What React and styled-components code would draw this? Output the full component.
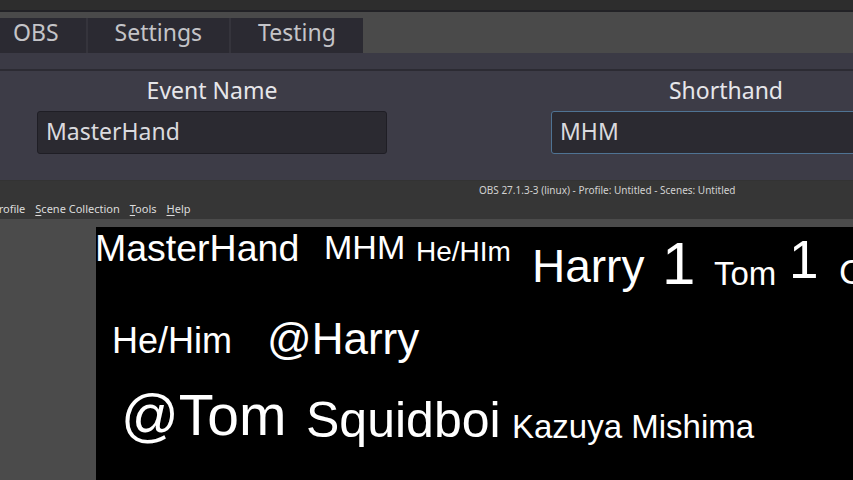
import React from 'react';
import styled, { createGlobalStyle } from 'styled-components';

const GlobalStyle = createGlobalStyle`
  html, body {
    margin: 0;
    padding: 0;
    background: #2e2e2e;
    overflow: hidden;
  }
  body {
    font-family: "Noto Sans", "Open Sans", sans-serif;
  }
`;

const Page = styled.div`
  width: 853px;
  height: 480px;
  display: flex;
  flex-direction: column;
  overflow: hidden;
  background: #2e2e2e;
`;

const TopStrip = styled.div`
  height: 10px;
  flex: none;
  background: #2d2d2d;
  border-bottom: 2px solid #222226;
`;

const TabBar = styled.div`
  height: 41px;
  flex: none;
  display: flex;
  align-items: flex-end;
  background: #4a4a4a;
`;

const TabRow = styled.div`
  display: flex;
  gap: 2px;
  margin-left: -14px;
  background: #35343c;
`;

const Tab = styled.div`
  box-sizing: border-box;
  height: 35px;
  padding: 0 27px 8px;
  display: flex;
  align-items: center;
  background: #2b2a32;
  color: #c4c4c8;
  font-size: 23px;
`;

const SubBar = styled.div`
  height: 16px;
  flex: none;
  background: #3b3a45;
  border-bottom: 2px solid #2c2b33;
`;

const FieldPanel = styled.div`
  height: 109px;
  flex: none;
  display: flex;
  gap: 164px;
  padding-left: 37px;
  background: #3d3c47;
`;

const Field = styled.div`
  width: 350px;
  flex: none;
  display: flex;
  flex-direction: column;
  align-items: center;
  padding-top: 3px;
`;

const FieldLabel = styled.div`
  color: #e6e6ea;
  font-size: 23px;
  line-height: 32px;
  margin-bottom: 5px;
`;

const TextInput = styled.input`
  box-sizing: border-box;
  width: 100%;
  height: 43px;
  padding: 0 8px 4px;
  border-radius: 3px;
  border: 1px solid ${p => (p.$focused ? '#4f7393' : '#1f1e25')};
  background: #2b2a31;
  color: #dadade;
  font-family: "Noto Sans", "Open Sans", sans-serif;
  font-size: 23px;
  outline: none;
`;

const ObsWindow = styled.div`
  flex: 1;
  display: flex;
  flex-direction: column;
  background: #363636;
  min-height: 0;
`;

const TitleBar = styled.div`
  height: 20px;
  flex: none;
  display: flex;
  align-items: center;
  padding-left: 479px;
  padding-bottom: 1px;
  box-sizing: border-box;
  color: #d2d2d2;
  font-size: 10px;
  border-top: 1px solid #333333;
`;

const MenuBar = styled.div`
  height: 19px;
  flex: none;
  display: flex;
  align-items: center;
  gap: 10px;
  margin-left: -8px;
  padding-bottom: 3px;
  box-sizing: border-box;
  color: #dcdcdc;
  font-size: 11px;
`;

const MenuItem = styled.span`
  & u {
    text-decoration-thickness: 1px;
    text-underline-offset: 2px;
  }
`;

const Workspace = styled.div`
  flex: 1;
  display: flex;
  padding-top: 8px;
  background: #4b4b4b;
  min-height: 0;
`;

const SidePane = styled.div`
  width: 96px;
  flex: none;
`;

const Canvas = styled.div`
  position: relative;
  flex: 1;
  background: #000000;
  overflow: hidden;
`;

const Word = styled.span`
  position: absolute;
  left: ${p => p.$x}px;
  top: ${p => p.$y}px;
  font-family: "Liberation Sans", Arial, sans-serif;
  font-size: ${p => p.$size}px;
  line-height: 1;
  color: #ffffff;
  white-space: nowrap;
`;

// x = left edge, b = baseline (canvas coords), s = font size
const words = [
  { t: 'MasterHand', x: -1, b: 35, s: 37.5 },
  { t: 'MHM', x: 228, b: 32, s: 34 },
  { t: 'He/HIm', x: 320, b: 35, s: 28 },
  { t: 'Harry', x: 436, b: 55, s: 46 },
  { t: '1', x: 566, b: 58, s: 60 },
  { t: 'Tom', x: 618, b: 58, s: 33 },
  { t: '1', x: 693, b: 51, s: 53 },
  { t: 'C', x: 743, b: 57, s: 35 },
  { t: 'He/Him', x: 16, b: 126, s: 36 },
  { t: '@Harry', x: 171, b: 127, s: 44 },
  { t: '@Tom', x: 25, b: 208, s: 57 },
  { t: 'Squidboi', x: 210, b: 210, s: 50 },
  { t: 'Kazuya Mishima', x: 416, b: 211, s: 33 },
];

export default function App() {
  return (
    <Page>
      <GlobalStyle />
      <TopStrip />
      <TabBar>
        <TabRow>
          <Tab>OBS</Tab>
          <Tab>Settings</Tab>
          <Tab>Testing</Tab>
        </TabRow>
      </TabBar>
      <SubBar />
      <FieldPanel>
        <Field>
          <FieldLabel>Event Name</FieldLabel>
          <TextInput readOnly defaultValue="MasterHand" />
        </Field>
        <Field>
          <FieldLabel>Shorthand</FieldLabel>
          <TextInput $focused readOnly defaultValue="MHM" />
        </Field>
      </FieldPanel>
      <ObsWindow>
        <TitleBar>OBS 27.1.3-3 (linux) - Profile: Untitled - Scenes: Untitled</TitleBar>
        <MenuBar>
          <MenuItem><u>P</u>rofile</MenuItem>
          <MenuItem><u>S</u>cene Collection</MenuItem>
          <MenuItem><u>T</u>ools</MenuItem>
          <MenuItem><u>H</u>elp</MenuItem>
        </MenuBar>
        <Workspace>
          <SidePane />
          <Canvas>
            {words.map((w, i) => (
              <Word key={i} $x={w.x} $y={w.b - Math.round(w.s * 0.8465)} $size={w.s}>
                {w.t}
              </Word>
            ))}
          </Canvas>
        </Workspace>
      </ObsWindow>
    </Page>
  );
}
